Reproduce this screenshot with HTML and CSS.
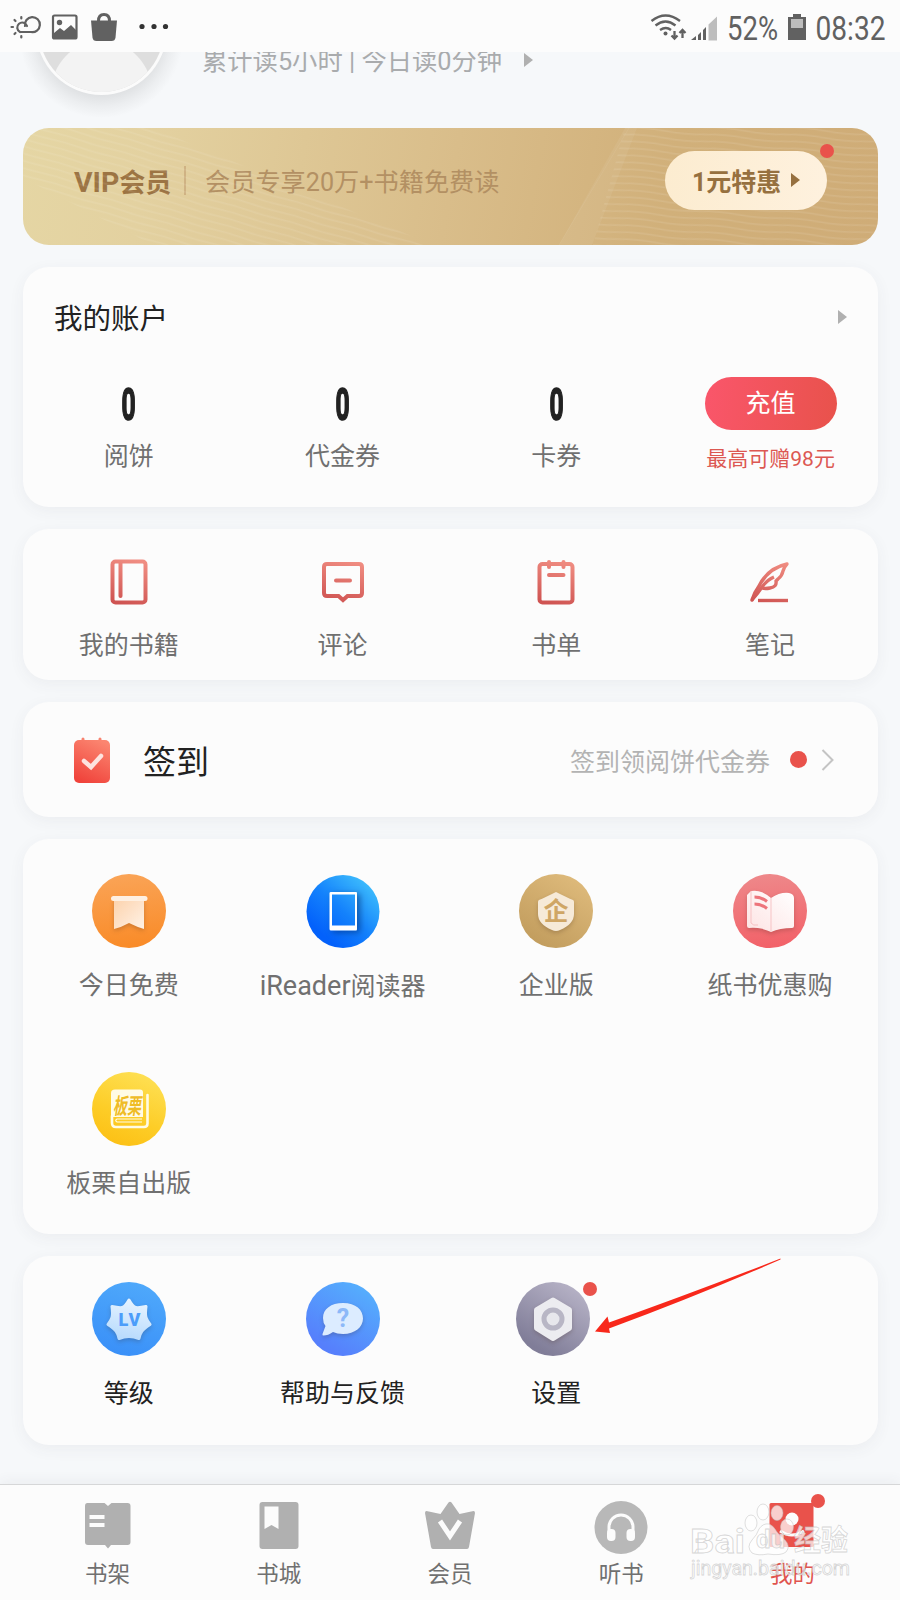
FILE: index.html
```html
<!DOCTYPE html>
<html lang="zh-CN">
<head>
  <meta charset="UTF-8">
  <title>我的</title>
  <link rel="stylesheet" href="styles.css">
</head>
<body>
  <div class="screen">
    <!-- Status bar -->
    <div class="status">
      <svg class="statusLeft" width="180" height="52" viewBox="0 0 180 52">
        <g fill="none" stroke="#616161" stroke-width="2.2" stroke-linecap="round">
          <path d="M20 32a5 5 0 1 1 7-6M25 26a7.5 7.5 0 1 1 6 6H21"/>
          <path d="M21.3 17v1.5M14.5 20l1 1M11.5 27h1.5M14.5 34l1-1M21.3 36v1.5"/>
        </g>
        <rect x="53" y="15.500" width="23.500" height="23" rx="1.500" fill="none" stroke="#616161" stroke-width="2.200"/>
        <circle cx="59.500" cy="22.500" r="2.700" fill="#616161"/>
        <path d="M54 33l6-5 4 3 7-6 5 5v8H54z" fill="#616161"/>
        <path d="M91 20.500h26l-1.500 17q-.5 3.500-4 3.500h-15q-3.500 0-4-3.500z" fill="#616161"/>
        <path d="M98.500 21q0-6.500 5.500-6.500t5.500 6.500" fill="none" stroke="#616161" stroke-width="3"/>
        <g fill="#333"><circle cx="142" cy="26.500" r="2.600"/><circle cx="154" cy="26.500" r="2.600"/><circle cx="165.500" cy="26.500" r="2.600"/></g>
      </svg>
      <svg class="statusRight" width="250" height="52" viewBox="650 0 250 52">
        <g fill="none" stroke="#616161" stroke-width="2.300">
          <path d="M651.500 21q14-11 28.500 0M655.500 25.500q10-8 20 0M660 30q6-4 11 0"/>
          <path d="M674.500 31v7M671.500 35.500l3 3 3-3M682.500 38v-8M679.500 33l3-3 3 3"/>
        </g>
        <circle cx="665.500" cy="33.500" r="2" fill="#616161"/>
        <path d="M708.500 24.500l8.500-8v24h-8.500z" fill="#bdbdbd"/>
        <path d="M691 40l5-4v4zM698 35l3-3v8h-3zM703 30l3-3v13h-3z" fill="#616161"/>
        <text x="727" y="40" textLength="51" lengthAdjust="spacingAndGlyphs">52%</text>
        <path d="M788 17h5v-3h8v3h5v23h-18z" fill="#616161"/>
        <rect x="791" y="19" width="12" height="9" fill="#bdbdbd"/>
        <text x="815.500" y="40" textLength="70" lengthAdjust="spacingAndGlyphs">08:32</text>
      </svg>
    </div>

    <!-- Profile, scrolled partly under the status bar -->
    <div class="profile">
      <svg class="avatar" width="166" height="76" viewBox="18 52 166 76">
        <defs>
          <radialGradient id="halo"><stop offset=".72" stop-color="#dfe1e3"/><stop offset=".86" stop-color="#eceef0"/><stop offset="1" stop-color="#f6f8fa"/></radialGradient>
          <clipPath id="face"><circle cx="101.500" cy="29.500" r="62.500"/></clipPath>
        </defs>
        <circle cx="101.500" cy="36" r="82" fill="url(#halo)"/>
        <circle cx="101.500" cy="29.500" r="65.500" fill="#fbfbfb"/>
        <g clip-path="url(#face)">
          <rect x="36" y="40" width="130" height="60" fill="#dedede"/>
          <circle cx="101.500" cy="91" r="50" fill="#f3f3f3"/>
        </g>
      </svg>
      <div class="readTime">累计读5小时 | 今日读0分钟</div>
      <i class="tri readTri"></i>
    </div>

    <!-- VIP banner -->
    <div class="vip">
      <svg class="vipBg" width="855" height="117" viewBox="0 0 855 117">
        <defs>
          <pattern id="waveA" width="60" height="7" patternUnits="userSpaceOnUse" patternTransform="rotate(16)">
            <path d="M0 3q15 1 30 0t30 0" fill="none" stroke="#fff" stroke-opacity=".09" stroke-width="1.500"/>
          </pattern>
          <pattern id="waveB" width="80" height="7" patternUnits="userSpaceOnUse" patternTransform="rotate(5)">
            <path d="M0 3q20 2 40 0t40 0" fill="none" stroke="#fff" stroke-opacity=".1" stroke-width="1.500"/>
          </pattern>
        </defs>
        <path d="M0 0h130l280 117H130L0 50z" fill="url(#waveA)"/>
        <path d="M602 0h253v117H570z" fill="url(#waveB)"/>
        <path d="M602 0h12l-45 117h-33z" fill="#fff" fill-opacity=".06"/>
        <path d="M606 0L536 117" stroke="#fff" stroke-opacity=".06"/>
      </svg>
      <div class="vipName"><span>VIP</span>会员</div>
      <div class="vipLine"></div>
      <div class="vipDesc">会员专享20万+书籍免费读</div>
      <div class="vipBtn"><span>1元特惠</span><i class="tri"></i><b class="dot"></b></div>
    </div>

    <!-- Account -->
    <div class="card account">
      <div class="accountHead"><h2>我的账户</h2><i class="tri"></i></div>
      <div class="grid">
        <div class="item"><div class="num">0</div><div class="label">阅饼</div></div>
        <div class="item"><div class="num">0</div><div class="label">代金券</div></div>
        <div class="item"><div class="num">0</div><div class="label">卡券</div></div>
        <div class="item"><div class="recharge">充值</div><div class="promo">最高可赠98元</div></div>
      </div>
    </div>

    <!-- Shortcuts -->
    <div class="card shortcuts">
      <svg class="defs" width="0" height="0">
        <defs>
          <linearGradient id="red" gradientUnits="userSpaceOnUse" x1="30" y1="2" x2="18" y2="46"><stop offset="0" stop-color="#f08d82"/><stop offset="1" stop-color="#cf5452"/></linearGradient>
        </defs>
      </svg>
      <div class="grid">
        <div class="item">
          <svg class="line" width="48" height="48" viewBox="0 0 48 48"><rect x="7.500" y="3.500" width="33" height="41" rx="3"/><path d="M15.500 4v34" stroke-linecap="round"/></svg>
          <div class="label">我的书籍</div>
        </div>
        <div class="item">
          <svg class="line" width="48" height="48" viewBox="0 0 48 48"><path d="M8 6h32q3 0 3 3v26q0 3-3 3H28.500L24 42l-4.500-4H8q-3 0-3-3V9q0-3 3-3z"/><path d="M17 22.500h14" stroke-linecap="round"/></svg>
          <div class="label">评论</div>
        </div>
        <div class="item">
          <svg class="line" width="48" height="48" viewBox="0 0 48 48"><rect x="7.500" y="6" width="33" height="38.500" rx="3"/><path d="M17 4v5M31.500 4v5M17 17h14.500" stroke-linecap="round"/></svg>
          <div class="label">书单</div>
        </div>
        <div class="item">
          <svg class="line feather" width="48" height="48" viewBox="0 0 48 48"><path d="M6 42q2-7 7-14Q22 10 41 6q-3 3-4 7-1 5-5 8l-2 2q1 6-6 7-5 1-8 0" stroke-linejoin="round" stroke-linecap="round"/><path d="M6 42q6-7 10-13 5-7 12-10"/><path d="M12 42.500h30"/></svg>
          <div class="label">笔记</div>
        </div>
      </div>
    </div>

    <!-- Daily sign-in -->
    <div class="card sign">
      <svg class="signIcon" width="40" height="50" viewBox="0 0 40 50">
        <defs><linearGradient id="signBg" x1=".7" y1="0" x2=".3" y2="1"><stop offset="0" stop-color="#fb8570"/><stop offset="1" stop-color="#f0433b"/></linearGradient></defs>
        <path d="M11 3v4M28 3v4" stroke="#f8826f" stroke-width="3" stroke-linecap="round"/>
        <rect x="2" y="4" width="36" height="43" rx="5" fill="url(#signBg)"/>
        <path d="M12 25l7 6 10-11" fill="none" stroke="#fde3df" stroke-width="4.500" stroke-linecap="round"/>
      </svg>
      <h3>签到</h3>
      <div class="signTip">签到领阅饼代金券</div>
      <b class="dot big"></b>
      <svg class="chevron" width="14" height="24" viewBox="0 0 14 24"><path d="M1.500 2l10 10-10 10" fill="none" stroke="#c4c4c4" stroke-width="2"/></svg>
    </div>

    <!-- Services -->
    <div class="card services">
      <div class="grid">
        <div class="item">
          <svg class="round" width="74" height="74" viewBox="0 0 74 74">
            <defs>
              <linearGradient id="gFree" x1=".3" y1="0" x2=".4" y2="1"><stop offset="0" stop-color="#faa457"/><stop offset="1" stop-color="#f98b28"/></linearGradient>
              <linearGradient id="gFlag" x1="0" y1="0" x2="1" y2="1"><stop offset="0" stop-color="#fcd2ac"/><stop offset="1" stop-color="#fff2e6"/></linearGradient>
            </defs>
            <circle cx="37" cy="37" r="37" fill="url(#gFree)"/>
            <path class="lift" d="M22 25h30v30q-7-2-15-6-7 4-15 6z" fill="url(#gFlag)"/>
            <rect x="19" y="22" width="36.500" height="5" rx="2.500" fill="#fef0e2"/>
          </svg>
          <div class="label">今日免费</div>
        </div>
        <div class="item">
          <svg class="round" width="74" height="74" viewBox="0 0 74 74">
            <defs><linearGradient id="gReader" gradientUnits="userSpaceOnUse" x1="64" y1="10" x2="18" y2="62"><stop offset="0" stop-color="#3dbcfc"/><stop offset=".55" stop-color="#1482fc"/><stop offset="1" stop-color="#0361fb"/></linearGradient></defs>
            <circle cx="37" cy="37.500" r="36.500" fill="url(#gReader)"/>
            <path class="liftDark" d="M25 18h25q1 0 1 1v36q0 1.500-1 1.500H25q-1.500 0-1.500-1.500V19q0-1 1.500-1z" fill="url(#gReader)"/>
            <path fill-rule="evenodd" d="M25 18h25q1 0 1 1v36q0 1.500-1 1.500H25q-1.500 0-1.500-1.500V19q0-1 1.500-1zM26 20.500v31h23v-31z" fill="#fff"/>
          </svg>
          <div class="label"><span class="latin">iReader</span>阅读器</div>
        </div>
        <div class="item">
          <svg class="round" width="74" height="74" viewBox="0 0 74 74">
            <defs><linearGradient id="gCorp" x1=".8" y1="0" x2=".2" y2="1"><stop offset="0" stop-color="#dfbb7c"/><stop offset="1" stop-color="#c09b5c"/></linearGradient></defs>
            <circle cx="37" cy="37" r="37" fill="url(#gCorp)"/>
            <path class="lift" d="M37 18q10 5 17 8 1 .5 1 2v12q0 10-14 16-4 2-8 0-14-6-14-16V28q0-1.500 1-2 7-3 17-8z" fill="#f6ead8"/>
            <text class="corpText" x="37" y="46" text-anchor="middle">企</text>
          </svg>
          <div class="label">企业版</div>
        </div>
        <div class="item">
          <svg class="round" width="74" height="74" viewBox="0 0 74 74">
            <defs>
              <linearGradient id="gBook" x1=".4" y1="0" x2=".5" y2="1"><stop offset="0" stop-color="#ee888a"/><stop offset="1" stop-color="#f26168"/></linearGradient>
              <linearGradient id="gPage" x1="1" y1="0" x2="0" y2="1"><stop offset="0" stop-color="#fff"/><stop offset="1" stop-color="#fde3e3"/></linearGradient>
            </defs>
            <circle cx="37" cy="37" r="37" fill="url(#gBook)"/>
            <path class="lift" d="M14 21l4-4q10-2 20 7 9-6 18-5 5 1 5 5v28q0 2-2 2-12 0-21 4-10-5-22-4-2 0-2-2z" fill="url(#gPage)"/>
            <path d="M18 17v32q2 3 7 2M38 24v33" fill="none" stroke="#f5b9bb" stroke-width=".8"/>
            <path d="M21.500 23q7 0 12.500 4.500M21.500 30q7 0 12.500 4.500" fill="none" stroke="#ed747b" stroke-width="3"/>
          </svg>
          <div class="label">纸书优惠购</div>
        </div>
        <div class="item">
          <svg class="round" width="74" height="74" viewBox="0 0 74 74">
            <defs><linearGradient id="gSelf" x1=".7" y1="0" x2=".3" y2="1"><stop offset="0" stop-color="#fee054"/><stop offset=".6" stop-color="#fdcd27"/><stop offset="1" stop-color="#fcc015"/></linearGradient></defs>
            <circle cx="37" cy="37" r="37" fill="url(#gSelf)"/>
            <path d="M23 17.500h25q3 0 3 3V45H19V21q0-3.500 4-3.500z" fill="#fffbe5"/>
            <path d="M20 44v7q0 4 4 4h28q3.500 0 3.500-3.500V23" fill="none" stroke="#fffbe5" stroke-width="2.600" stroke-linecap="round"/>
            <path d="M50 50H25q-2.500-1.500 0-3h25" fill="none" stroke="#fffbe5" stroke-width="1.200"/>
            <text class="selfText" x="35" y="41.500" text-anchor="middle" textLength="28" lengthAdjust="spacingAndGlyphs">板栗</text>
          </svg>
          <div class="label">板栗自出版</div>
        </div>
      </div>
    </div>

    <!-- Tools -->
    <div class="card tools">
      <div class="grid">
        <div class="item">
          <svg class="round" width="74" height="74" viewBox="0 0 74 74">
            <defs>
              <linearGradient id="gLv" x1=".7" y1="0" x2=".4" y2="1"><stop offset="0" stop-color="#4fa9fb"/><stop offset="1" stop-color="#3a90f8"/></linearGradient>
              <linearGradient id="gStar" x1=".6" y1="0" x2=".4" y2="1"><stop offset="0" stop-color="#e6f3ff"/><stop offset="1" stop-color="#b8dbfd"/></linearGradient>
            </defs>
            <circle cx="37" cy="37" r="37" fill="url(#gLv)"/>
            <path class="lift" d="M37 18q4 7 7 7.500t10-1q-1 8 0 11t4 7q-6 4-8 6.500t-3 7.500q-5-2-10-2t-10 2q-1-5-3-7.500t-8-6.500q3-4 4-7t0-11q7 1.500 10 1t7-7.500z" fill="url(#gStar)" stroke="url(#gStar)" stroke-width="3" stroke-linejoin="round"/>
            <text class="lvText" x="37.500" y="44" text-anchor="middle" textLength="22" lengthAdjust="spacing">LV</text>
          </svg>
          <div class="label">等级</div>
        </div>
        <div class="item">
          <svg class="round" width="74" height="74" viewBox="0 0 74 74">
            <defs><linearGradient id="gHelp" x1=".8" y1=".1" x2=".3" y2=".9"><stop offset="0" stop-color="#55adfd"/><stop offset="1" stop-color="#567ffc"/></linearGradient></defs>
            <circle cx="37" cy="37" r="37" fill="url(#gHelp)"/>
            <path class="lift" d="M37 21c13 0 20 7 20 15.500S49 52 37 52q-6 0-10-2-5 3.500-9.500 3.500-1.500 0-1-1.500l3-8q-2.500-3-2.500-8C17 27 25 21 37 21z" fill="#dcecff"/>
            <text class="helpText" x="37" y="45" text-anchor="middle">?</text>
          </svg>
          <div class="label">帮助与反馈</div>
        </div>
        <div class="item">
          <div class="setting">
            <svg class="round" width="74" height="74" viewBox="0 0 74 74">
              <defs><linearGradient id="gSet" x1=".8" y1=".1" x2=".3" y2=".9"><stop offset="0" stop-color="#b4b0c4"/><stop offset="1" stop-color="#807d98"/></linearGradient></defs>
              <circle cx="37" cy="37" r="37" fill="url(#gSet)"/>
              <path class="lift" d="M37 18.500l16 9.500v18l-16 10-16-10V28z" fill="#ececf0" stroke="#ececf0" stroke-width="6" stroke-linejoin="round"/>
              <circle cx="37" cy="37" r="9" fill="#e7e7ec" stroke="#b8b6c5" stroke-width="5"/>
            </svg>
            <b class="dot"></b>
          </div>
          <div class="label">设置</div>
        </div>
      </div>
      <svg class="arrow" width="194" height="80" viewBox="0 0 194 80"><path d="M188.500 1.500Q100 36 17 65.500l-1.500-6L3 74.500l15 1.500-1-4.500Q105 39 188.500 2.500z" fill="#f8281b"/></svg>
    </div>

    <!-- Bottom tabs -->
    <div class="tabs">
      <div class="tab">
        <svg width="56" height="56" viewBox="0 0 56 56"><path d="M7.500 5h17l3.500 3 3.500-3h16q3 0 3 3v36q0 3-3 3H31l-3 3.500-3-3.500H8q-3 0-3-3V8q0-3 2.500-3z" fill="#b0b0b0"/><path d="M9.500 17h15v4h-15zM9.500 25h15v4h-15z" fill="#fcfcfc"/></svg>
        <span>书架</span>
      </div>
      <div class="tab">
        <svg width="56" height="56" viewBox="0 0 56 56"><rect x="8.500" y="4" width="39" height="47" rx="3" fill="#b0b0b0"/><path d="M13.500 8.500h14V31l-7-4-7 4z" fill="#fcfcfc"/></svg>
        <span>书城</span>
      </div>
      <div class="tab">
        <svg width="56" height="56" viewBox="0 0 56 56"><path d="M4.500 13l14 3 8-11.500q1.500-1.500 3 0l8 11.500 14-3q1.500 0 1.500 2l-6 34q-.5 2-2 2H11q-1.500 0-2-2L3 15q0-2 1.500-2z" fill="#b0b0b0"/><path d="M18 23l10 15 10-15" fill="none" stroke="#fcfcfc" stroke-width="5"/></svg>
        <span>会员</span>
      </div>
      <div class="tab">
        <svg width="56" height="56" viewBox="0 0 56 56"><circle cx="28" cy="29.500" r="26.500" fill="#b8b8b8"/><path d="M16 34v-5a12 12 0 0 1 24 0v5" fill="none" stroke="#fcfcfc" stroke-width="3"/><rect x="14" y="31" width="8.500" height="12" rx="4" fill="#fcfcfc"/><rect x="33.500" y="31" width="8.500" height="12" rx="4" fill="#fcfcfc"/></svg>
        <span>听书</span>
      </div>
      <div class="tab active">
        <svg width="56" height="56" viewBox="0 0 56 56"><rect x="5.500" y="5" width="44" height="44" rx="1.500" fill="#e9524b"/><circle cx="28" cy="21" r="6.500" fill="#fcfcfc"/><path d="M16 33q12 8 24 0" stroke="#fcfcfc" stroke-width="3" fill="none"/></svg>
        <span>我的</span>
        <b class="dot"></b>
      </div>
      <svg class="watermark" width="175" height="95" viewBox="685 1490 175 95">
        <g fill="#fff" fill-opacity=".72" stroke="#bbb" stroke-opacity=".6" stroke-width=".8">
          <ellipse cx="751" cy="1523" rx="6" ry="8"/>
          <ellipse cx="763" cy="1512" rx="6" ry="8"/>
          <ellipse cx="777" cy="1513" rx="6" ry="7.500"/>
          <ellipse cx="787" cy="1527" rx="6.500" ry="8"/>
          <path d="M759 1529q4-6 10-5 4 1 8 8 4 5 8 8 6 6 1 12-5 4-18 2-10 2-16-1-6-6 0-13 5-5 7-11z"/>
          <text class="wmBig" x="690" y="1553" textLength="55" lengthAdjust="spacingAndGlyphs">Bai</text>
          <text class="wmDu" x="756" y="1548" textLength="29" lengthAdjust="spacingAndGlyphs">du</text>
          <text class="wmCn" x="794" y="1551" textLength="54" lengthAdjust="spacingAndGlyphs">经验</text>
          <text class="wmSmall" x="691" y="1575" textLength="159" lengthAdjust="spacingAndGlyphs">jingyan.baidu.com</text>
        </g>
      </svg>
    </div>
  </div>
</body>
</html>
```
FILE: styles.css
```css
* {
  box-sizing: border-box;
}
body {
  margin: 0;
  font-family: Roboto, "Noto Sans CJK SC", sans-serif;
  background-color: #f6f8fa;
  color: #222;
}
h2, h3 {
  margin: 0;
  font-weight: normal;
}
svg {
  display: block;
  flex: none;
}
.screen {
  width: 900px;
  height: 1600px;
  overflow: hidden;
  display: flex;
  flex-direction: column;
}
/* Status bar */
.status {
  height: 52px;
  flex: none;
  display: flex;
  justify-content: space-between;
  background-color: #fcfcfc;
}
.status text {
  font-size: 33px;
  fill: #616161;
}
/* Small pieces */
.tri {
  width: 0;
  height: 0;
  border-left: 9px solid #b0b0b0;
  border-top: 7px solid transparent;
  border-bottom: 7px solid transparent;
}
.dot {
  width: 14px;
  height: 14px;
  border-radius: 50%;
  background-color: #e9524b;
}
.dot.big {
  width: 17px;
  height: 17px;
}
/* Profile */
.profile {
  height: 76px;
  flex: none;
  overflow: hidden;
  display: flex;
  align-items: flex-start;
  padding-left: 18px;
}
.readTime {
  margin: -8px 0 0 18px;
  font-size: 25.3px;
  line-height: 36px;
  color: #a9abad;
  white-space: nowrap;
  width: 303px;
}
.readTri {
  margin: 1px 0 0 19px;
}
/* VIP banner */
.vip {
  position: relative;
  height: 117px;
  flex: none;
  margin: 0 22px 22px 23px;
  padding: 0 51px 13px 51px;
  border-radius: 26px;
  overflow: hidden;
  display: flex;
  align-items: center;
  background: linear-gradient(100deg, #e5d6a4, #e3d1a0 15%, #d9bd8a 50%, #d1b07a 75%, #cfac77);
}
.vipBg {
  position: absolute;
  left: 0;
  top: 0;
}
.vipName {
  font-size: 26px;
  font-weight: bold;
  color: #9c7443;
  width: 110px;
}
.vipName span {
  font-size: 28.5px;
}
.vipLine {
  width: 2px;
  height: 29px;
  background-color: #cfb283;
}
.vipDesc {
  margin-left: 19px;
  font-size: 25.2px;
  color: #b39063;
  white-space: nowrap;
}
.vipBtn {
  position: relative;
  margin-left: auto;
  width: 162px;
  height: 59px;
  padding-left: 27px;
  border-radius: 30px;
  display: flex;
  align-items: center;
  background: linear-gradient(90deg, #fcecd0, #fef1de);
  color: #96703f;
  font-size: 25px;
  font-weight: bold;
}
.vipBtn .tri {
  margin-left: 10px;
  border-left-color: #96703f;
}
.vipBtn .dot {
  position: absolute;
  right: -7px;
  top: -7px;
}
/* Cards */
.card {
  flex: none;
  margin: 0 22px 22px 23px;
  border-radius: 26px;
  background-color: #fcfcfc;
  box-shadow: 0 4px 16px rgba(60, 70, 90, 0.06);
}
.grid {
  display: grid;
  grid-template-columns: repeat(4, 1fr);
  margin: 0 1px 0 -1px;
}
.item {
  display: flex;
  flex-direction: column;
  align-items: center;
}
.label {
  font-size: 25px;
  line-height: 36px;
  color: #707070;
  white-space: nowrap;
}
.latin {
  font-size: 27px;
}
/* Account */
.account {
  height: 240px;
}
.accountHead {
  height: 99px;
  padding: 0 31px;
  display: flex;
  align-items: center;
  justify-content: space-between;
}
.accountHead h2 {
  font-size: 28.5px;
}
.num {
  height: 78px;
  line-height: 78px;
  font-size: 44px;
  font-weight: bold;
  -webkit-text-stroke: 1.6px #222;
  transform: scaleX(0.56);
}
.account .label {
  margin-top: -5px;
}
.recharge {
  margin: 11px 0 0 1px;
  width: 132px;
  height: 53px;
  line-height: 54px;
  border-radius: 27px;
  text-align: center;
  font-size: 25px;
  color: #fff;
  background: linear-gradient(100deg, #fa566b, #e8524b);
}
.promo {
  margin: 13px 0 0 1px;
  font-size: 21px;
  line-height: 32px;
  color: #dc5852;
}
/* Shortcuts */
.shortcuts {
  height: 151px;
  padding-top: 29px;
}
.shortcuts .label {
  margin-top: 22px;
}
.defs {
  position: absolute;
}
.line {
  fill: none;
  stroke: url(#red);
  stroke-width: 4;
}
.feather {
  stroke-width: 3.4;
}
/* Sign-in */
.sign {
  height: 115px;
  padding: 0 43px 0 49px;
  display: flex;
  align-items: center;
}
.signIcon {
  margin-top: 2px;
}
.sign h3 {
  margin-left: 31px;
  font-size: 33px;
}
.signTip {
  margin-left: auto;
  font-size: 25px;
  color: #b3b3b3;
}
.sign .dot {
  margin: 0 14px 0 20px;
}
/* Services and tools */
.services {
  height: 395px;
  padding-top: 35px;
}
.services .grid {
  grid-auto-rows: 198px;
}
.services .label, .tools .label {
  margin-top: 20px;
}
.lift {
  filter: drop-shadow(0 2px 2px rgba(60, 30, 20, 0.22));
}
.liftDark {
  filter: drop-shadow(3px 2px 3px rgba(0, 30, 90, 0.5));
}
.corpText {
  font-size: 25px;
  font-weight: bold;
  fill: #cfa665;
}
.selfText {
  font-size: 22px;
  font-weight: bold;
  font-style: italic;
  fill: #efbc26;
}
.lvText {
  font-size: 18px;
  font-weight: 900;
  fill: #4b9dfa;
}
.helpText {
  font-size: 25px;
  font-weight: bold;
  fill: #8db9f8;
}
.tools {
  position: relative;
  height: 189px;
  padding-top: 26px;
}
.tools .label {
  color: #222;
}
.setting {
  position: relative;
  margin-right: 6px;
}
.setting .dot {
  position: absolute;
  right: -7px;
  top: 0;
}
.arrow {
  position: absolute;
  left: 569px;
  top: 1px;
}
/* Bottom tabs */
.tabs {
  position: relative;
  flex: none;
  height: 116px;
  margin-top: 17px;
  padding: 13px 22px 0;
  display: flex;
  background-color: #fcfcfc;
  border-top: 1px solid #d6d7d8;
  box-shadow: 0 -3px 12px rgba(60, 70, 90, 0.06);
}
.tab {
  position: relative;
  flex: 1;
  display: flex;
  flex-direction: column;
  align-items: center;
  font-size: 22.5px;
  line-height: 32px;
  color: #707070;
}
.tab span {
  margin-top: 4px;
}
.tab.active {
  color: #e0544e;
}
.tab .dot {
  position: absolute;
  left: 104px;
  top: -4px;
}
.watermark {
  position: absolute;
  left: 685px;
  top: 5px;
}
.wmBig {
  font-size: 34px;
  font-weight: bold;
}
.wmCn {
  font-size: 29px;
  font-weight: bold;
}
.wmDu {
  font-size: 25px;
  font-weight: bold;
}
.wmSmall {
  font-size: 20px;
}
```
